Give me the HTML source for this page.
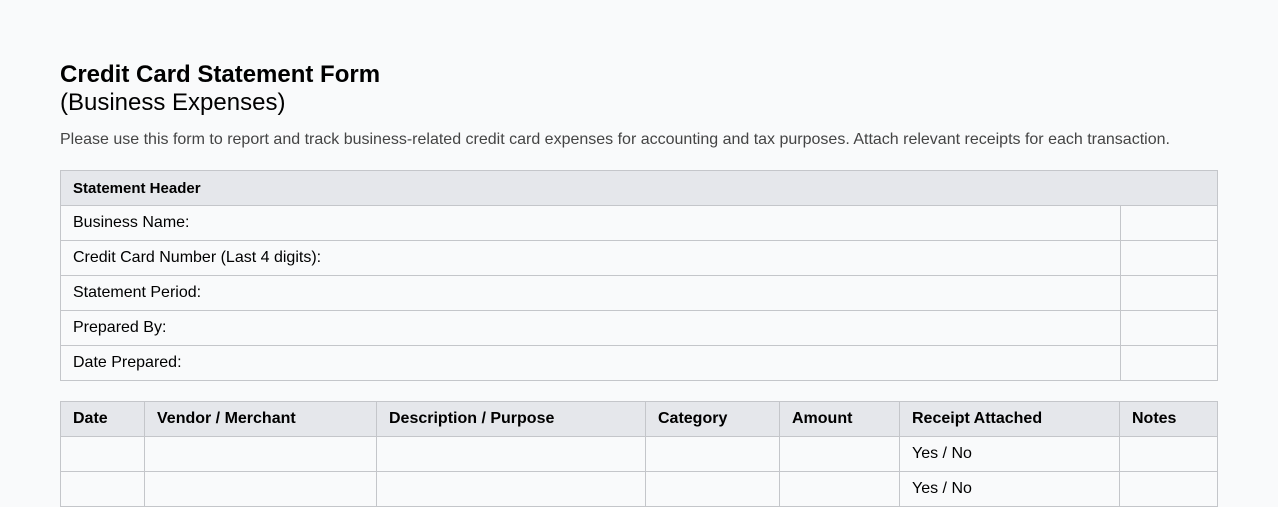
<!DOCTYPE html>
<html><head><meta charset="utf-8"><style>
body{margin:0;background:#f9fafb;font-family:"Liberation Sans",sans-serif;color:#000;width:1278px;height:501px;overflow:hidden;position:relative}
h1{position:absolute;left:60px;top:60px;margin:0;font-size:24px;font-weight:bold;line-height:29px}
.sub{position:absolute;left:60px;top:88px;font-size:24px;line-height:29px}
p{position:absolute;left:60px;top:130px;margin:0;font-size:16px;line-height:20px;color:#444}
table{position:absolute;left:60px;border-collapse:collapse;table-layout:fixed;width:1157px;font-size:16px}
td,th{border:1px solid #c4c6ca;height:34px;padding:0 12px;text-align:left;vertical-align:middle;box-sizing:border-box}
th{background:#e5e7eb;font-weight:bold}
#t1{top:170px}
#t1 th{font-size:15px}
#t2{top:401px}
</style></head><body>
<h1>Credit Card Statement Form</h1>
<div class="sub">(Business Expenses)</div>
<p>Please use this form to report and track business-related credit card expenses for accounting and tax purposes. Attach relevant receipts for each transaction.</p>
<table id="t1"><colgroup><col style="width:1060px"><col style="width:97px"></colgroup>
<tr><th colspan="2" style="height:35px">Statement Header</th></tr>
<tr><td style="height:35px">Business Name:</td><td></td></tr>
<tr><td style="height:35px">Credit Card Number (Last 4 digits):</td><td></td></tr>
<tr><td style="height:35px">Statement Period:</td><td></td></tr>
<tr><td style="height:35px">Prepared By:</td><td></td></tr>
<tr><td style="height:35px">Date Prepared:</td><td></td></tr>
</table>
<table id="t2"><colgroup><col style="width:84px"><col style="width:232px"><col style="width:269px"><col style="width:134px"><col style="width:120px"><col style="width:220px"><col style="width:98px"></colgroup>
<tr><th style="height:35px">Date</th><th>Vendor / Merchant</th><th>Description / Purpose</th><th>Category</th><th>Amount</th><th>Receipt Attached</th><th>Notes</th></tr>
<tr><td style="height:35px"></td><td></td><td></td><td></td><td></td><td>Yes / No</td><td></td></tr>
<tr><td style="height:35px"></td><td></td><td></td><td></td><td></td><td>Yes / No</td><td></td></tr>
</table>
</body></html>
